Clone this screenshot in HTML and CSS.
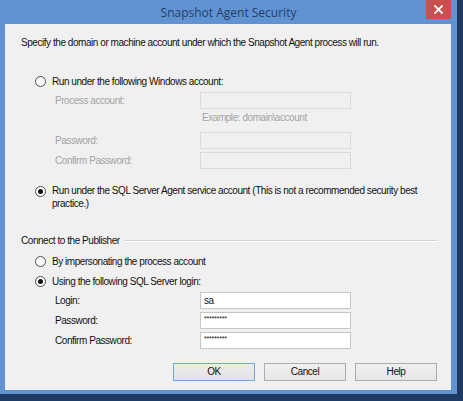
FILE: index.html
```html
<!DOCTYPE html>
<html>
<head>
<meta charset="utf-8">
<link rel="stylesheet" href="styles.css">
</head>
<body>
<div class="window">
  <div class="titlebar">
    <div></div>
    <div class="title">Snapshot Agent Security</div>
    <div class="controls">
      <div class="close">
        <svg width="9" height="9" viewBox="0 0 9 9"><path d="M1 1L8 8M8 1L1 8" stroke="#fff" stroke-width="1.8" stroke-linecap="square"/></svg>
      </div>
    </div>
  </div>
  <div class="client">
    <div class="intro">Specify the domain or machine account under which the Snapshot Agent process will run.</div>

    <div class="radio-row r1"><span class="radio"></span><span>Run under the following Windows account:</span></div>
    <div class="field-row f-proc disabled"><span class="label">Process account:</span><span class="input dis"></span></div>
    <div class="hint">Example: domain\account</div>
    <div class="field-row f-pw1 disabled"><span class="label">Password:</span><span class="input dis"></span></div>
    <div class="field-row f-gap3 disabled"><span class="label">Confirm Password:</span><span class="input dis"></span></div>

    <div class="radio-row r2 multi"><span class="radio on"></span><span class="wrap">Run under the SQL Server Agent service account (This is not a recommended security best practice.)</span></div>

    <div class="group-head"><span>Connect to the Publisher</span><span class="line"></span></div>

    <div class="radio-row r3"><span class="radio"></span><span>By impersonating the process account</span></div>
    <div class="radio-row r4"><span class="radio on"></span><span>Using the following SQL Server login:</span></div>
    <div class="field-row f-login"><span class="label">Login:</span><span class="input">sa</span></div>
    <div class="field-row f-gap3"><span class="label">Password:</span><span class="input pw">*********</span></div>
    <div class="field-row f-gap3"><span class="label">Confirm Password:</span><span class="input pw">*********</span></div>

    <div class="buttons">
      <div class="btn default">OK</div>
      <div class="btn">Cancel</div>
      <div class="btn">Help</div>
    </div>
  </div>
</div>
</body>
</html>
```
FILE: styles.css
```css
html, body {
  margin: 0;
  padding: 0;
}
body {
  width: 463px;
  height: 401px;
  background: #1f3a62;
  overflow: hidden;
  font-family: "Liberation Sans", Arial, sans-serif;
  font-size: 10px;
  letter-spacing: -0.45px;
  color: #111;
}
.window {
  width: 457px;
  height: 394px;
  background: #6193d3;
  display: flex;
  flex-direction: column;
}
.titlebar {
  height: 24px;
  display: grid;
  grid-template-columns: 1fr auto 1fr;
  flex: none;
}
.title {
  font-family: "Open Sans", "Noto Sans", sans-serif;
  font-size: 12px;
  letter-spacing: 0;
  color: #233f66;
  line-height: 24px;
  padding-top: 1px;
}
.controls {
  display: flex;
  justify-content: flex-end;
  padding-right: 6px;
}
.close {
  width: 25px;
  height: 19px;
  background: #c9504b;
  display: flex;
  align-items: center;
  justify-content: center;
}
.close svg { display: block; margin-top: -1px; }
.client {
  margin: 0 6px 4px 5px;
  flex: 1;
  background: #f0f0f0;
  display: flex;
  flex-direction: column;
  padding-left: 30px;
}
.intro {
  margin-top: 12px;
  margin-left: -14px;
  height: 13px;
  line-height: 13px;
}
.radio-row {
  display: flex;
  align-items: center;
  height: 13px;
  line-height: 13px;
  gap: 6px;
}
.radio-row.multi {
  align-items: flex-start;
  height: 25px;
  line-height: 12.5px;
}
.radio-row.multi .radio { margin-top: 1px; }
.wrap { width: 372px; }
.r1 { margin-top: 26px; }
.r2 { margin-top: 16px; }
.r3 { margin-top: 8px; }
.r4 { margin-top: 7px; }
.radio {
  width: 11px;
  height: 11px;
  box-sizing: border-box;
  border: 1px solid #4a4a4a;
  border-radius: 50%;
  background: #fff;
  flex: none;
  display: flex;
  align-items: center;
  justify-content: center;
}
.radio.on::after {
  content: "";
  width: 5px;
  height: 5px;
  border-radius: 50%;
  background: #111;
}
.field-row {
  display: flex;
  align-items: center;
  height: 17px;
  padding-left: 20px;
}
.field-row .label {
  width: 145px;
  flex: none;
}
.disabled .label { color: #a3a3a3; }
.f-proc { margin-top: 4px; }
.f-pw1 { margin-top: 8px; }
.f-gap3 { margin-top: 3px; }
.f-login { margin-top: 4px; }
.input {
  width: 151px;
  height: 17px;
  box-sizing: border-box;
  border: 1px solid #c6c6c6;
  background: #fff;
  padding-left: 3px;
  line-height: 15px;
  font-size: 10px;
  color: #111;
}
.input.dis {
  background: #f0f0f0;
  border-color: #dadada;
}
.input.pw {
  font-size: 7px;
  letter-spacing: -0.2px;
  line-height: 11px;
}
.hint {
  margin-top: 3px;
  margin-left: 167px;
  height: 12px;
  line-height: 12px;
  color: #a3a3a3;
}
.group-head {
  margin-top: 24px;
  margin-left: -14px;
  margin-right: 13px;
  height: 13px;
  line-height: 13px;
  display: flex;
  align-items: center;
  gap: 5px;
}
.group-head .line {
  flex: 1;
  height: 0;
  border-top: 1px solid #d3d3d3;
  border-bottom: 1px solid #fff;
}
.buttons {
  margin-top: 14px;
  margin-left: 138px;
  display: flex;
  gap: 9px;
}
.btn {
  width: 82px;
  height: 18px;
  box-sizing: border-box;
  border: 1px solid #acacac;
  background: linear-gradient(#f0f0f0, #e5e5e5);
  text-align: center;
  line-height: 16px;
}
.btn.default {
  border-color: #6fa8dc;
  background: linear-gradient(#ececec, #e3e3e3);
}
```
